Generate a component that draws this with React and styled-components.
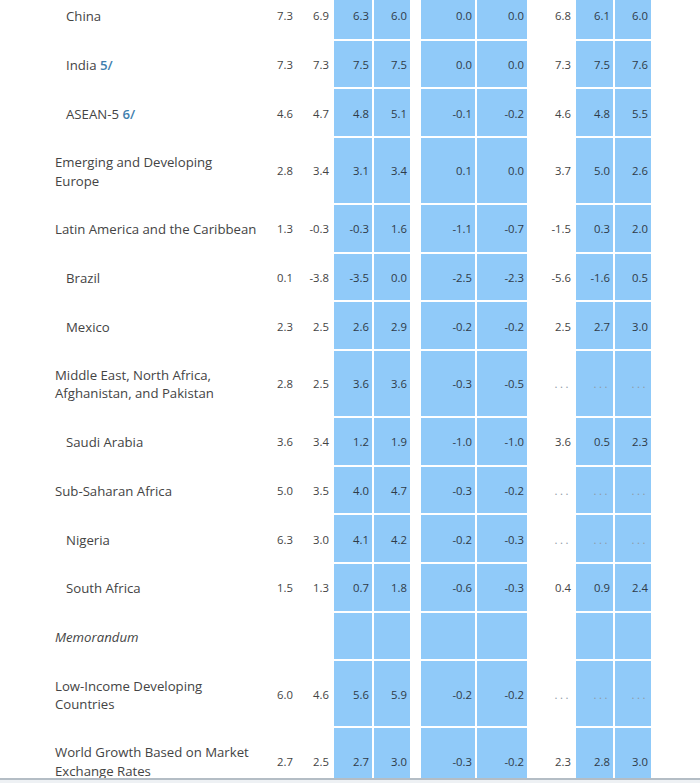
import styled, { createGlobalStyle } from 'styled-components';

const GlobalStyle = createGlobalStyle`
  html, body {
    margin: 0;
    padding: 0;
    background: #ffffff;
    overflow: hidden;
  }
  body {
    font-family: "Open Sans", Lato, sans-serif;
    color: #3a3a3a;
  }
`;

// 9 valores por fila: 2 históricos, 2 proyección, 2 diferencia, 3 trimestrales
const filas = [
  { label: 'China', nivel: 2, v: ['7.3', '6.9', '6.3', '6.0', '0.0', '0.0', '6.8', '6.1', '6.0'] },
  { label: 'India', nota: '5/', nivel: 2, v: ['7.3', '7.3', '7.5', '7.5', '0.0', '0.0', '7.3', '7.5', '7.6'] },
  { label: 'ASEAN-5', nota: '6/', nivel: 2, v: ['4.6', '4.7', '4.8', '5.1', '-0.1', '-0.2', '4.6', '4.8', '5.5'] },
  { label: 'Emerging and Developing\nEurope', nivel: 1, v: ['2.8', '3.4', '3.1', '3.4', '0.1', '0.0', '3.7', '5.0', '2.6'] },
  { label: 'Latin America and the Caribbean', nivel: 1, v: ['1.3', '-0.3', '-0.3', '1.6', '-1.1', '-0.7', '-1.5', '0.3', '2.0'] },
  { label: 'Brazil', nivel: 2, v: ['0.1', '-3.8', '-3.5', '0.0', '-2.5', '-2.3', '-5.6', '-1.6', '0.5'] },
  { label: 'Mexico', nivel: 2, v: ['2.3', '2.5', '2.6', '2.9', '-0.2', '-0.2', '2.5', '2.7', '3.0'] },
  { label: 'Middle East, North Africa,\nAfghanistan, and Pakistan', nivel: 1, v: ['2.8', '2.5', '3.6', '3.6', '-0.3', '-0.5', '...', '...', '...'] },
  { label: 'Saudi Arabia', nivel: 2, v: ['3.6', '3.4', '1.2', '1.9', '-1.0', '-1.0', '3.6', '0.5', '2.3'] },
  { label: 'Sub-Saharan Africa', nivel: 1, v: ['5.0', '3.5', '4.0', '4.7', '-0.3', '-0.2', '...', '...', '...'] },
  { label: 'Nigeria', nivel: 2, v: ['6.3', '3.0', '4.1', '4.2', '-0.2', '-0.3', '...', '...', '...'] },
  { label: 'South Africa', nivel: 2, v: ['1.5', '1.3', '0.7', '1.8', '-0.6', '-0.3', '0.4', '0.9', '2.4'] },
  { label: 'Memorandum', nivel: 1, italica: true, v: ['', '', '', '', '', '', '', '', ''] },
  { label: 'Low-Income Developing\nCountries', nivel: 1, v: ['6.0', '4.6', '5.6', '5.9', '-0.2', '-0.2', '...', '...', '...'] },
  { label: 'World Growth Based on Market\nExchange Rates', nivel: 1, v: ['2.7', '2.5', '2.7', '3.0', '-0.3', '-0.2', '2.3', '2.8', '3.0'] },
];

// columnas resaltadas en azul (índices dentro de v)
const azules = [2, 3, 4, 5, 7, 8];
const anchos = [268, 29, 36, 40, 38, 9, 56, 52, 47, 39, 38, 48];

function App() {
  return (
    <>
      <GlobalStyle />
      <Contenedor>
        <Tabla>
          <colgroup>
            {anchos.map((w, i) => (
              <col key={i} style={{ width: w }} />
            ))}
          </colgroup>
          <tbody>
            {filas.map((f) => (
              <tr key={f.label}>
                <Etiqueta $nivel={f.nivel} $italica={f.italica}>
                  {f.label}
                  {f.nota && <Nota> {f.nota}</Nota>}
                </Etiqueta>
                {f.v.slice(0, 4).map((x, i) => (
                  <Celda key={i} $azul={azules.includes(i)} $vacio={x === '...'}>{x}</Celda>
                ))}
                <Separador />
                {f.v.slice(4).map((x, i) => (
                  <Celda key={i + 4} $azul={azules.includes(i + 4)} $vacio={x === '...'}>{x}</Celda>
                ))}
                <Separador />
              </tr>
            ))}
          </tbody>
        </Tabla>
      </Contenedor>
      <BarraInferior />
    </>
  );
}

export default App;

const Contenedor = styled.div`
  width: 700px;
  margin-top: -9px;
`;

const Tabla = styled.table`
  table-layout: fixed;
  width: 700px;
  border-collapse: separate;
  border-spacing: 0;
`;

const Etiqueta = styled.td`
  border: 1px solid #fff;
  padding: 15.2px 3px 13.2px ${(p) => (p.$nivel === 2 ? '65px' : '54px')};
  line-height: 18.3px;
  font-size: 13.2px;
  color: #444;
  white-space: pre-line;
  font-style: ${(p) => (p.$italica ? 'italic' : 'normal')};
  vertical-align: middle;
`;

const Nota = styled.span`
  color: #3f7fae;
  font-weight: 600;
`;

const Celda = styled.td`
  border: 1px solid #fff;
  padding: 15.2px 3px 13.2px;
  line-height: 18.3px;
  font-size: 11.3px;
  text-align: right;
  white-space: nowrap;
  vertical-align: middle;
  background: ${(p) => (p.$azul ? '#90caf9' : '#fff')};
  color: ${(p) => (p.$vacio ? '#8f9aa5' : p.$azul ? '#2f3b48' : '#444')};
  letter-spacing: ${(p) => (p.$vacio ? '2.5px' : 'normal')};
`;

const Separador = styled.td`
  border: 1px solid #fff;
  padding: 0;
`;

const BarraInferior = styled.div`
  position: fixed;
  left: 0;
  right: 0;
  bottom: 0;
  height: 3px;
  border-top: 2px solid #b4bdc5;
  background: #eef1f4;
`;
